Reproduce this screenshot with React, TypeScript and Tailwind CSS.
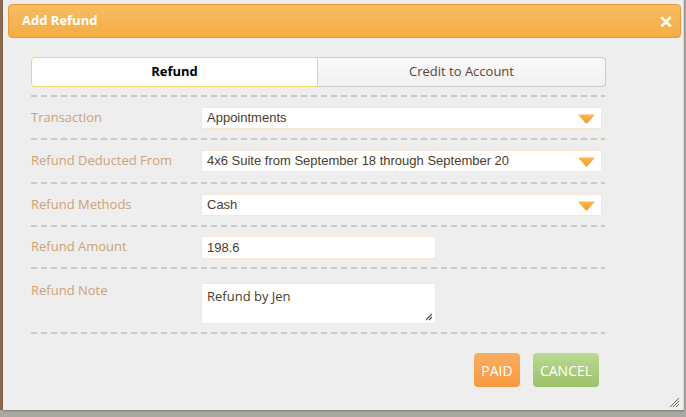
import React from "react"

const Arrow = () => (
  <svg width="17" height="10" viewBox="0 0 17 10" className="absolute right-[6px] top-[6px]">
    <defs>
      <linearGradient id="tri" x1="0" y1="0" x2="0" y2="1">
        <stop offset="0" stopColor="#fbb84f" />
        <stop offset="1" stopColor="#f39a2c" />
      </linearGradient>
    </defs>
    <path d="M1 0.5 H16 Q16.8 0.5 16.2 1.4 L9.3 9.2 Q8.5 10 7.7 9.2 L0.8 1.4 Q0.2 0.5 1 0.5 Z" fill="url(#tri)" />
  </svg>
)

const Select = ({ value }: { value: string }) => (
  <div className="relative h-[22px] w-[401px] bg-white border border-[#f5e6d6] pl-[5px] leading-[20px] text-[13px] text-[#4b3b2b] font-['Liberation_Sans',Arial,sans-serif]">
    {value}
    <Arrow />
  </div>
)

const Dash = () => (
  <div className="h-[2px] w-[574px] bg-[repeating-linear-gradient(90deg,#cdc9c4_0px,#cdc9c4_6px,transparent_6px,transparent_10px)]" />
)

const Label = ({ children }: { children: React.ReactNode }) => (
  <div className="w-[170px] text-[13px] text-[#cfa276]">{children}</div>
)

export default function App() {
  return (
    <div className="relative w-[686px] h-[417px] overflow-hidden bg-[#a9a8a3] font-['Open_Sans',sans-serif]">
      <div className="absolute left-0 top-0 h-[410px] w-[3px] bg-[#8b6c52]" />
      <div className="relative ml-[3px] w-[681px] h-[410px] bg-[#eeeeee] border-r border-[#d8d8d8] shadow-[0_1px_2px_rgba(0,0,0,0.3)]">
        <div className="pt-[4px] pl-[5px] pr-[2px]">
          <div className="flex items-center justify-between h-[34px] rounded-[4px] border border-[#eb9a33] bg-gradient-to-b from-[#f6bc62] to-[#f5ac44] pl-[13px] pr-[7px]">
            <span className="text-[13px] font-bold text-white">Add Refund</span>
            <span className="text-[17px] font-bold leading-none text-white">✕</span>
          </div>
        </div>

        <div className="pl-[28px] pt-[19px]">
          <div className="flex w-[575px] h-[30px] text-[13px]">
            <div className="flex-1 flex items-center justify-center rounded-l-[4px] border border-[#f4d36c] bg-white font-bold text-black">
              Refund
            </div>
            <div className="w-[288px] flex items-center justify-center rounded-r-[4px] border border-l-0 border-[#cccccc] bg-gradient-to-b from-[#fafafa] to-[#f0f0f0] text-[#5a4632]">
              Credit to Account
            </div>
          </div>

          <div className="mt-[8px]">
            <Dash />
            <div className="flex items-center h-[41px]">
              <Label>Transaction</Label>
              <Select value="Appointments" />
            </div>
            <Dash />
            <div className="flex items-center h-[42px]">
              <Label>Refund Deducted From</Label>
              <Select value="4x6 Suite from September 18 through September 20" />
            </div>
            <Dash />
            <div className="flex items-center h-[41px]">
              <Label>Refund Methods</Label>
              <Select value="Cash" />
            </div>
            <Dash />
            <div className="flex items-center h-[40px]">
              <Label>Refund Amount</Label>
              <div className="h-[23px] w-[235px] bg-white border border-[#f5e6d6] pl-[5px] leading-[21px] text-[13px] text-[#4b3b2b] font-['Liberation_Sans',Arial,sans-serif]">
                198.6
              </div>
            </div>
            <Dash />
            <div className="flex items-start h-[63px] pt-[12px]">
              <Label>Refund Note</Label>
              <div className="relative mt-[2px] h-[41px] w-[235px] bg-white border border-[#f5e6d6] pl-[5px] pt-[4px] text-[13px] leading-[16px] text-[#4b3b2b]">
                Refund by Jen
                <svg width="8" height="8" viewBox="0 0 8 8" className="absolute right-[2px] bottom-[2px]">
                  <path d="M7 1 L1 7 M7 4 L4 7" stroke="#555" strokeWidth="1.2" />
                </svg>
              </div>
            </div>
            <Dash />
          </div>

          <div className="flex justify-end gap-[13px] w-[568px] mt-[19px]">
            <button className="h-[34px] w-[46px] rounded-[4px] bg-gradient-to-b from-[#f9ad62] to-[#f69a3c] text-[14px] text-white">
              PAID
            </button>
            <button className="h-[34px] w-[66px] rounded-[4px] bg-gradient-to-b from-[#b9db92] to-[#9dc06b] text-[14px] text-white">
              CANCEL
            </button>
          </div>
        </div>

        <svg width="12" height="12" viewBox="0 0 12 12" className="absolute right-[3px] bottom-[2px]">
          <path d="M11 2 L2 11 M11 5 L5 11 M11 8 L8 11" stroke="#666" strokeWidth="1" />
        </svg>
      </div>
    </div>
  )
}
